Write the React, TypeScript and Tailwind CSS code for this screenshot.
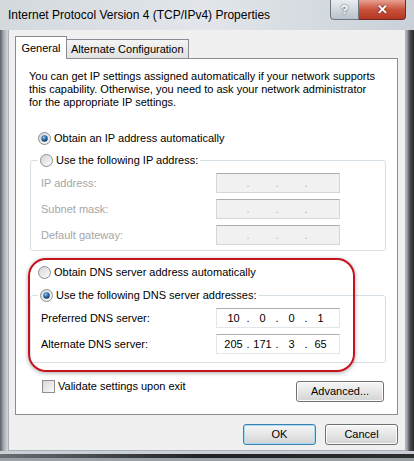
import React from 'react';

const font = { fontFamily: '"Liberation Sans", Arial, sans-serif' };

function Radio({ checked }: { checked?: boolean }) {
  return (
    <svg width="13" height="13" viewBox="0 0 13 13" className="shrink-0">
      <defs>
        <linearGradient id="rb" x1="0" y1="0" x2="1" y2="1">
          <stop offset="0" stopColor="#d5d5d5" />
          <stop offset="1" stopColor="#fbfbfb" />
        </linearGradient>
        <radialGradient id="rd" cx="0.4" cy="0.35" r="0.7">
          <stop offset="0" stopColor="#9fd0f5" />
          <stop offset="0.5" stopColor="#2a6aa8" />
          <stop offset="1" stopColor="#0c2f55" />
        </radialGradient>
      </defs>
      <circle cx="6.5" cy="6.5" r="6" fill="url(#rb)" stroke="#8f8f8f" />
      {checked && <circle cx="6.5" cy="6.5" r="3.2" fill="url(#rd)" />}
    </svg>
  );
}

function IpBox({ values, disabled }: { values?: string[]; disabled?: boolean }) {
  const segs = values ?? ['', '', '', ''];
  return (
    <div
      className={
        disabled
          ? 'w-[124px] h-[20px] flex items-center pl-[4px] bg-[#f1f1f1] border border-[#d6d6d6] border-t-[#adadad] text-[#b0b0b0]'
          : 'w-[124px] h-[20px] flex items-center pl-[4px] bg-white border border-[#e3e5e9] border-t-[#abadb3] text-black'
      }
    >
      {segs.map((v, i) => (
        <React.Fragment key={i}>
          <span className="w-[25px] text-center">{v}</span>
          {i < 3 && <span className="w-[4px] text-center">.</span>}
        </React.Fragment>
      ))}
    </div>
  );
}

function Row({ label, disabled, values }: { label: string; disabled?: boolean; values?: string[] }) {
  return (
    <div className="flex items-center h-[20px]">
      <span className={disabled ? 'w-[175px] text-[#a6a6a6]' : 'w-[175px] text-black'}>{label}</span>
      <IpBox disabled={disabled} values={values} />
    </div>
  );
}

function WinButton({ children, primary, className }: { children: React.ReactNode; primary?: boolean; className?: string }) {
  return (
    <div
      className={
        'h-[21px] flex items-center justify-center rounded-[3px] border bg-linear-to-b from-[#f6f6f6] via-[#e6e6e6] to-[#d3d3d3] ' +
        (primary ? 'border-[#3c7fb1] shadow-[inset_0_0_0_1px_#a8dcf5] ' : 'border-[#707070] shadow-[inset_0_0_0_1px_#fcfcfc] ') +
        (className ?? '')
      }
    >
      {children}
    </div>
  );
}

export default function App() {
  return (
    <div
      className="relative w-[414px] h-[461px] overflow-hidden flex flex-col bg-[#c5ccd3] text-[11px] leading-[13px] text-black"
      style={font}
    >
      {/* title bar */}
      <div className="h-[30px] flex items-start shrink-0 bg-linear-to-r from-[#d4d9de] via-[#e2e6ea] to-[#c9d0d7]">
        <span className="pl-[8px] pt-[9px] text-[12px] text-black">Internet Protocol Version 4 (TCP/IPv4) Properties</span>
        <div className="ml-auto mr-[8px] flex">
          <div className="w-[29px] h-[20px] flex items-center justify-center border border-[#6e7680] border-t-0 rounded-bl-[4px] bg-linear-to-b from-[#e9edf1] to-[#b9c2cb] text-white font-bold text-[13px] [text-shadow:0_0_2px_#333]">
            ?
          </div>
          <div className="w-[47px] h-[20px] flex items-center justify-center border border-[#6d2a22] border-t-0 border-l-0 rounded-br-[4px] bg-linear-to-b from-[#e8a192] via-[#c9513b] to-[#b53620] text-white font-bold text-[13px] [text-shadow:0_0_2px_#3a0a00]">
            ✕
          </div>
        </div>
      </div>

      <div className="flex h-[421px] shrink-0">
        <div className="w-[8px] bg-linear-to-r from-[#5d6166] via-[#aab0b6] to-[#d3d8dd]" />
        {/* client area */}
        <div className="w-[398px] bg-[#f0f0f0] border border-[#a9b0b8] border-t-0 flex flex-col">
          <div className="ml-[6px] mr-[7px] mt-[6px]">
            <div className="flex items-end relative z-10 -mb-px">
              <div className="h-[23px] w-[52px] flex items-center justify-center bg-white border border-b-0 border-[#898c95] text-black">
                General
              </div>
              <div className="h-[20px] px-[4px] flex items-center bg-linear-to-b from-[#f4f4f4] to-[#e1e1e1] border border-l-0 border-[#898c95] text-black">
                Alternate Configuration
              </div>
            </div>
            <div className="h-[357px] bg-white border border-[#898c95] flex flex-col">
              <p className="ml-[13px] mt-[11px] w-[350px]">
                You can get IP settings assigned automatically if your network supports this capability. Otherwise, you
                need to ask your network administrator for the appropriate IP settings.
              </p>

              <div className="ml-[22px] mt-[21px] h-[16px] flex items-center gap-[3px]">
                <Radio checked />
                <span>Obtain an IP address automatically</span>
              </div>

              <fieldset className="ml-[14px] mt-[6px] w-[356px] border border-[#d5dfe5] rounded-[3px] px-[10px] pt-[5px] pb-[5px]">
                <legend className="ml-[-3px] px-[2px] h-[16px] flex items-center gap-[3px]">
                  <Radio />
                  <span>Use the following IP address:</span>
                </legend>
                <div className="flex flex-col gap-[6px]">
                  <Row label="IP address:" disabled />
                  <Row label="Subnet mask:" disabled />
                  <Row label="Default gateway:" disabled />
                </div>
              </fieldset>

              <div className="ml-[22px] mt-[13px] h-[16px] flex items-center gap-[3px]">
                <Radio />
                <span>Obtain DNS server address automatically</span>
              </div>

              <fieldset className="ml-[14px] mt-[7px] w-[356px] border border-[#d5dfe5] rounded-[3px] px-[10px] pt-[5px] pb-[8px]">
                <legend className="ml-[-3px] px-[2px] h-[16px] flex items-center gap-[3px]">
                  <Radio checked />
                  <span>Use the following DNS server addresses:</span>
                </legend>
                <div className="flex flex-col gap-[6px]">
                  <Row label="Preferred DNS server:" values={['10', '0', '0', '1']} />
                  <Row label="Alternate DNS server:" values={['205', '171', '3', '65']} />
                </div>
              </fieldset>

              <div className="flex items-start">
                <div className="ml-[26px] mt-[16px] h-[14px] flex items-center gap-[3px]">
                  <span className="w-[13px] h-[13px] border border-[#8f8f8f] bg-linear-to-br from-[#d8d8d8] to-[#fbfbfb]" />
                  <span>Validate settings upon exit</span>
                </div>
                <WinButton className="ml-auto mr-[13px] mt-[18px] w-[88px] h-[20px]">Advanced...</WinButton>
              </div>
            </div>
          </div>

          <div className="flex justify-end gap-[9px] mr-[7px] mt-[9px]">
            <WinButton primary className="w-[73px]">OK</WinButton>
            <WinButton className="w-[73px]">Cancel</WinButton>
          </div>
        </div>
        <div className="w-[8px] bg-linear-to-r from-[#b7bec5] via-[#4a4d50] to-[#26282a]" />
      </div>

      {/* bottom frame edge */}
      <div className="h-[3px] bg-[#c9cfd5]" />
      <div className="h-[4px] bg-linear-to-r from-[#6a6e72] via-[#1f2124] to-[#2c2e30]" />
      <div className="flex-1 bg-[#9aa0a6]" />

      {/* annotation overlay */}
      <div className="absolute left-[28px] top-[258px] w-[327px] h-[114px] rounded-[18px] border-2 border-[#c6121c] shadow-[0_1px_4px_rgba(0,0,0,0.35)] pointer-events-none" />
    </div>
  );
}
